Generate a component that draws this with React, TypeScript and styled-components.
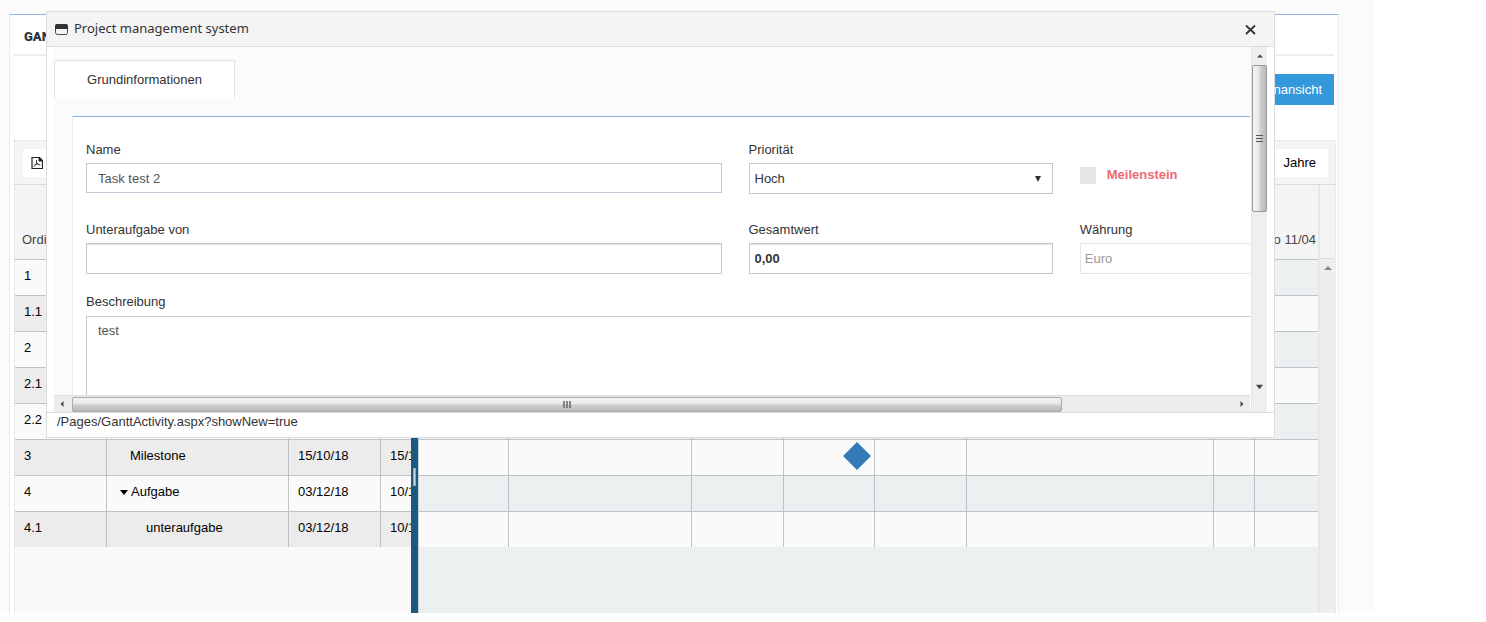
import React from "react";
import styled, { createGlobalStyle } from "styled-components";

const sans = `"Liberation Sans", Arial, sans-serif`;
const line = "#bdc3c7";

const GlobalStyle = createGlobalStyle`
  *, *::before, *::after { box-sizing: border-box; }
  body { margin: 0; background: #fff; color: #000; font: 13px/18px ${sans}; }
  button, input, select, textarea { font: inherit; color: inherit; margin: 0; border-radius: 0; }
`;

const Page = styled.main`
  position: relative;
  display: flex;
  flex-direction: column;
  min-height: calc(100vh - 9px);
  margin-right: 112px;
  padding: 14px 35px 0 9px;
  background: #fbfbfb;
`;

const Card = styled.section`
  flex: 1;
  display: flex;
  flex-direction: column;
  padding: 0 2px 0 4px;
  background: #fff;
  border: 1px solid #e7ecf1;
  border-top-color: #8ab4e6;
  border-bottom: 0;
`;

const CardTitle = styled.h1`
  margin: 0 2px 0 0;
  padding: 13px 10px 8px;
  border-bottom: 2px solid #eaeef2;
  color: #2f353b;
  font: 900 13px/18px Roboto, ${sans};
`;

const Actions = styled.div`
  display: flex;
  justify-content: flex-end;
  padding: 18px 2px 35px 0;
`;

const PrimaryButton = styled.button`
  height: 31px;
  padding: 0 12px;
  border: 0;
  background: #3598dc;
  color: #fff;
`;

const Gantt = styled.div`
  flex: 1;
  display: flex;
  flex-direction: column;
  border: 1px dotted #d5d5d5;
  border-bottom: 0;
`;

const Toolbar = styled.div`
  display: flex;
  justify-content: space-between;
  padding: 8px 7px 7px 8px;
  background: #f4f4f4;
  border-bottom: 1px solid #d9dcdd;
`;

const ToolButton = styled.button<{ $icon?: boolean }>`
  display: flex;
  align-items: center;
  height: 28px;
  padding: 0 ${(p) => (p.$icon ? 8 : 12)}px;
  border: 0;
  background: #fff;
`;

const GanttBody = styled.div`
  flex: 1;
  display: flex;
  min-width: 0;
`;

const TreePane = styled.div`
  flex: 0 0 396px;
  overflow: hidden;
  background: #fafafa;
`;

const TimelinePane = styled.div`
  flex: 1;
  min-width: 0;
  overflow: hidden;
  background: #ecf0f1;
`;

const Grid = styled.table<{ $width: string }>`
  table-layout: fixed;
  width: ${(p) => p.$width};
  border-collapse: separate;
  border-spacing: 0;
`;

const HeadCell = styled.th<{ $end?: boolean }>`
  height: 74px;
  padding: 0 ${(p) => (p.$end ? 2 : 7)}px 10px;
  vertical-align: bottom;
  text-align: ${(p) => (p.$end ? "right" : "left")};
  background: #f4f4f4;
  color: #444;
  font-weight: 400;
  white-space: nowrap;
`;

const Row = styled.tr<{ $bg: string }>`
  background: ${(p) => p.$bg};
`;

const Cell = styled.td<{ $indent?: number }>`
  height: 36px;
  padding: 0 0 3px ${(p) => p.$indent ?? 9}px;
  border-top: 1px solid ${line};
  border-right: 1px solid ${line};
  white-space: nowrap;
`;

const SlotCell = styled(Cell)`
  line-height: 0;
  &:last-child { border-right: 0; }
`;

const TreeLabel = styled.span`
  display: flex;
  align-items: center;
  gap: 3px;
`;

const Splitter = styled.div`
  flex: 0 0 8px;
  display: flex;
  justify-content: center;
  padding-top: 283px;
  background: #1c5980;
  border-right: 1px solid #c6d0d6;
`;

const Grip = styled.div`
  width: 3px;
  height: 18px;
  background: #c9d3da;
  border: 1px solid #8fabbf;
`;

const TimelineRail = styled.div`
  flex: 0 0 17px;
  display: flex;
  flex-direction: column;
  background: #eee;
  border-left: 2px solid #e6e8e8;
`;

const RailHead = styled.div`
  height: 74px;
  background: #f4f4f4;
  border-bottom: 1px solid #d9dcdd;
`;

const RailArrow = styled.div`
  padding: 5px 0 0 4px;
  line-height: 0;
`;

const Dialog = styled.section`
  position: absolute;
  top: 11px;
  left: 46px;
  right: 99px;
  background: #fff;
  border: 1px solid #dcdcdc;
`;

const DialogHeader = styled.header`
  display: flex;
  align-items: center;
  gap: 6px;
  height: 35px;
  padding: 0 18px 0 8px;
  background: #f4f4f4;
  border-bottom: 1px solid #dcdcdc;
`;

const DialogTitle = styled.h2`
  flex: 1;
  margin: 0;
  padding-bottom: 2px;
  color: #333;
  font: 400 13px/18px "Noto Sans", "Open Sans", sans-serif;
`;

const CloseButton = styled.button`
  display: flex;
  padding: 0;
  border: 0;
  background: none;
`;

const DialogBody = styled.div`
  display: grid;
  grid-template-columns: minmax(0, 1fr) 16px;
  grid-template-rows: 348px 17px;
  column-gap: 1px;
  padding: 0 7px;
`;

const Viewport = styled.div`
  overflow: hidden;
  padding-top: 13px;
  background: #fbfbfb;
`;

const Tab = styled.button`
  display: block;
  width: 181px;
  height: 38px;
  border: 1px solid #e0e0e0;
  border-bottom: 0;
  background: #fff;
  color: #333;
`;

const Form = styled.form`
  display: grid;
  grid-template-columns: repeat(4, 1fr);
  column-gap: 27px;
  width: calc(100% + 131px);
  margin: 18px 0 0 18px;
  padding: 24px 14px 0 13px;
  background: #fff;
  border: 1px solid #e7ecf1;
  border-top-color: #8ab4e6;
  color: #333;
`;

const Field = styled.div<{ $span?: number; $height?: number }>`
  grid-column: span ${(p) => p.$span ?? 1};
  display: flex;
  flex-direction: column;
  gap: ${(p) => (p.$span === 4 ? 5 : 4)}px;
  height: ${(p) => p.$height ?? 80}px;
`;

const TextInput = styled.input<{ $tone?: "soft" }>`
  width: 100%;
  height: ${(p) => (p.$tone === "soft" ? 30 : 31)}px;
  padding: 0 ${(p) => (p.$tone === "soft" ? 11 : 5)}px;
  border: 1px solid ${(p) => (p.$tone === "soft" ? "#c2cad8" : "#c8c8c8")};
  background: #fff;
  outline: 0;
  color: ${(p) => (p.$tone === "soft" ? "#555" : "#333")};
  box-shadow: ${(p) => (p.$tone === "soft" ? "none" : "inset 0 2px 0 -1px #e6e6e6")};
  &:disabled { border-color: #e4e4e4; box-shadow: none; color: #999; padding: 0 4px; }
`;

const AmountInput = styled(TextInput)`
  font-weight: 700;
`;

const TextArea = styled.textarea`
  height: 110px;
  padding: 5px 11px;
  border: 1px solid #c2cad8;
  color: #555;
  resize: none;
`;

const SelectBox = styled.div`
  position: relative;
  svg { position: absolute; top: 12px; right: 11px; pointer-events: none; }
`;

const Select = styled.select`
  appearance: none;
  display: block;
  width: 100%;
  height: 31px;
  padding: 0 5px;
  border: 1px solid #c8c8c8;
  background: #fff;
`;

const CheckLabel = styled.label`
  display: flex;
  align-items: center;
  align-self: flex-start;
  gap: 11px;
  padding-top: 25px;
  color: #ed6b75;
  font-weight: 700;
`;

const CheckBox = styled.input`
  appearance: none;
  width: 16px;
  height: 17px;
  background: #e5e5e5;
`;

const VBar = styled.div`
  display: flex;
  flex-direction: column;
  align-items: center;
  justify-content: space-between;
  grid-row: span 2;
  padding-bottom: 22px;
  background: #efefef;
  border-left: 1px solid #e4e4e4;
  line-height: 0;
`;

const VTop = styled.div`
  display: flex;
  flex-direction: column;
  align-items: center;
  gap: 6px;
  width: 100%;
  padding-top: 6px;
`;

const VThumb = styled.div`
  display: flex;
  align-items: center;
  justify-content: center;
  width: 100%;
  height: 147px;
  border: 1px solid #999;
  border-radius: 2px;
  background: linear-gradient(90deg, #f5f5f5, #e6e6e8 45%, #cfcfd2 55%, #b9b9bd);
`;

const HBar = styled.div`
  display: flex;
  align-items: center;
  padding: 1px 5px;
  background: #ececec;
  border-top: 1px solid #dedede;
`;

const HTrack = styled.div`
  flex: 1;
  height: 15px;
  padding: 0 7px;
`;

const HThumb = styled.div`
  display: flex;
  align-items: center;
  justify-content: center;
  width: calc(85% + 4px);
  height: 15px;
  border: 1px solid #aaa;
  border-radius: 2px;
  background: linear-gradient(#f5f5f5, #e6e6e8 45%, #cfcfd2 55%, #b9b9bd);
`;

const StatusBar = styled.footer`
  height: 25px;
  padding: 0 10px;
  border-top: 1px solid #dcdcdc;
  color: #333;
`;

type Dir = "up" | "down" | "left" | "right" | "caret";
const arrows: Record<Dir, string> = {
  up: "M4 2 8 6H0Z",
  down: "M0 2h8L4 7Z",
  left: "M6 0v8L2 4Z",
  right: "M2 0l4 4-4 4Z",
  caret: "M1 1h6L4 7Z",
};
const Arrow = ({ dir, color = "#444", size = 8 }: { dir: Dir; color?: string; size?: number }) => (
  <svg width={size} height={size} viewBox="0 0 8 8" aria-hidden="true">
    <path d={arrows[dir]} fill={color} />
  </svg>
);

const PdfIcon = () => (
  <svg width="12" height="12" viewBox="0 0 12 12" fill="none" stroke="#222" aria-hidden="true">
    <path d="M1 .5h7.500l3 3v8H1Z" strokeWidth="1.200" />
    <path d="M8 .5v3.500h3.500Z" fill="#222" />
    <path d="M5.500 3v2c0 2-1.500 4-3 4.500M5.500 5c.5 2 2 3 4 3M3.500 7.800c2-.8 3.500-1 5-.5" strokeWidth=".8" />
  </svg>
);

const WindowIcon = () => (
  <svg width="13" height="11" viewBox="0 0 13 11" aria-hidden="true">
    <rect x=".5" y=".5" width="12" height="10" rx="2" fill="#f4f4f4" stroke="#444" />
    <path d="M0 5V2a2 2 0 0 1 2-2h9a2 2 0 0 1 2 2v3Z" fill="#333" />
  </svg>
);

type Task = {
  no: string;
  name?: string;
  start?: string;
  end?: string;
  indent?: number;
  milestone?: boolean;
  open?: boolean;
};

const tasks: Task[] = [
  { no: "1" },
  { no: "1.1" },
  { no: "2" },
  { no: "2.1" },
  { no: "2.2" },
  { no: "3", name: "Milestone", start: "15/10/18", end: "15/10/18", indent: 23, milestone: true },
  { no: "4", name: "Aufgabe", start: "03/12/18", end: "10/12/18", indent: 13, open: true },
  { no: "4.1", name: "unteraufgabe", start: "03/12/18", end: "10/12/18", indent: 39 },
];

const treeColumns = [92, 182, 92, 92];
const slots = [90, 183, 92, 91, 92, 247, 41];

const TaskTree = () => (
  <TreePane>
    <Grid $width="458px">
      <colgroup>{treeColumns.map((w, i) => <col key={i} width={w} />)}</colgroup>
      <thead>
        <tr>
          <HeadCell>Ordinal</HeadCell>
          <HeadCell />
          <HeadCell />
          <HeadCell />
        </tr>
      </thead>
      <tbody>
        {tasks.map((t, i) => (
          <Row key={t.no} $bg={i % 2 ? "#ececec" : "#fafafa"}>
            <Cell>{t.no}</Cell>
            <Cell $indent={t.indent}>
              <TreeLabel>
                {t.open && <Arrow dir="down" color="#000" />}
                {t.name}
              </TreeLabel>
            </Cell>
            <Cell>{t.start}</Cell>
            <Cell>{t.end}</Cell>
          </Row>
        ))}
      </tbody>
    </Grid>
  </TreePane>
);

const Timeline = () => (
  <TimelinePane>
    <Grid $width="100%">
      <colgroup>
        {slots.map((w, i) => <col key={i} width={w} />)}
        <col />
      </colgroup>
      <thead>
        <tr>
          {slots.map((_, i) => <HeadCell key={i} />)}
          <HeadCell $end>Do 11/04</HeadCell>
        </tr>
      </thead>
      <tbody>
        {tasks.map((t, i) => (
          <Row key={t.no} $bg={i % 2 ? "#fafafa" : "#ecf0f1"}>
            {[...slots, 0].map((_, c) => {
              const marked = t.milestone && c === 3;
              return (
                <SlotCell key={c} $indent={marked ? 59 : 0}>
                  {marked && (
                    <svg width="28" height="28" viewBox="0 0 28 28" role="img" aria-label="Milestone">
                      <path d="M14 0 28 14 14 28 0 14Z" fill="#337ab7" />
                    </svg>
                  )}
                </SlotCell>
              );
            })}
          </Row>
        ))}
      </tbody>
    </Grid>
  </TimelinePane>
);

const TaskDialog = () => (
  <Dialog role="dialog" aria-label="Project management system">
    <DialogHeader>
      <WindowIcon />
      <DialogTitle>Project management system</DialogTitle>
      <CloseButton type="button" aria-label="Close">
        <svg width="11" height="11" viewBox="0 0 11 11" stroke="#333" strokeWidth="1.800" aria-hidden="true">
          <path d="M1 1.500l9 8.500M10 1.500l-9 8.500" />
        </svg>
      </CloseButton>
    </DialogHeader>
    <DialogBody>
      <Viewport>
        <Tab type="button">Grundinformationen</Tab>
        <Form>
          <Field $span={2}>
            <label htmlFor="name">Name</label>
            <TextInput id="name" $tone="soft" defaultValue="Task test 2" />
          </Field>
          <Field>
            <label htmlFor="priority">Priorität</label>
            <SelectBox>
              <Select id="priority" defaultValue="Hoch">
                <option>Hoch</option>
              </Select>
              <Arrow dir="caret" color="#333" />
            </SelectBox>
          </Field>
          <Field>
            <CheckLabel>
              <CheckBox type="checkbox" />
              Meilenstein
            </CheckLabel>
          </Field>
          <Field $span={2} $height={72}>
            <label htmlFor="parent">Unteraufgabe von</label>
            <TextInput id="parent" />
          </Field>
          <Field $height={72}>
            <label htmlFor="total">Gesamtwert</label>
            <AmountInput id="total" defaultValue="0,00" />
          </Field>
          <Field $height={72}>
            <label htmlFor="currency">Währung</label>
            <TextInput id="currency" defaultValue="Euro" disabled />
          </Field>
          <Field $span={4} $height={140}>
            <label htmlFor="description">Beschreibung</label>
            <TextArea id="description" defaultValue="test" />
          </Field>
        </Form>
      </Viewport>
      <VBar>
        <VTop>
          <Arrow dir="up" size={6} />
          <VThumb>
            <svg width="7" height="8" viewBox="0 0 7 8" stroke="#555" aria-hidden="true">
              <path d="M0 .5h7M0 3.500h7M0 6.500h7" />
            </svg>
          </VThumb>
        </VTop>
        <Arrow dir="down" size={7} />
      </VBar>
      <HBar>
        <Arrow dir="left" size={6} />
        <HTrack>
          <HThumb>
            <svg width="8" height="7" viewBox="0 0 8 7" stroke="#666" strokeWidth="1.500" aria-hidden="true">
              <path d="M1 0v7M4 0v7M7 0v7" />
            </svg>
          </HThumb>
        </HTrack>
        <Arrow dir="right" size={6} />
      </HBar>
    </DialogBody>
    <StatusBar>/Pages/GanttActivity.aspx?showNew=true</StatusBar>
  </Dialog>
);

export default function App() {
  return (
    <>
      <GlobalStyle />
      <Page>
        <Card>
          <CardTitle>GANTT</CardTitle>
          <Actions>
            <PrimaryButton type="button">Listenansicht</PrimaryButton>
          </Actions>
          <Gantt>
            <Toolbar>
              <ToolButton type="button" $icon aria-label="PDF">
                <PdfIcon />
              </ToolButton>
              <ToolButton type="button">Jahre</ToolButton>
            </Toolbar>
            <GanttBody>
              <TaskTree />
              <Splitter>
                <Grip />
              </Splitter>
              <Timeline />
              <TimelineRail>
                <RailHead />
                <RailArrow>
                  <Arrow dir="up" color="#888" />
                </RailArrow>
              </TimelineRail>
            </GanttBody>
          </Gantt>
        </Card>
        <TaskDialog />
      </Page>
    </>
  );
}
